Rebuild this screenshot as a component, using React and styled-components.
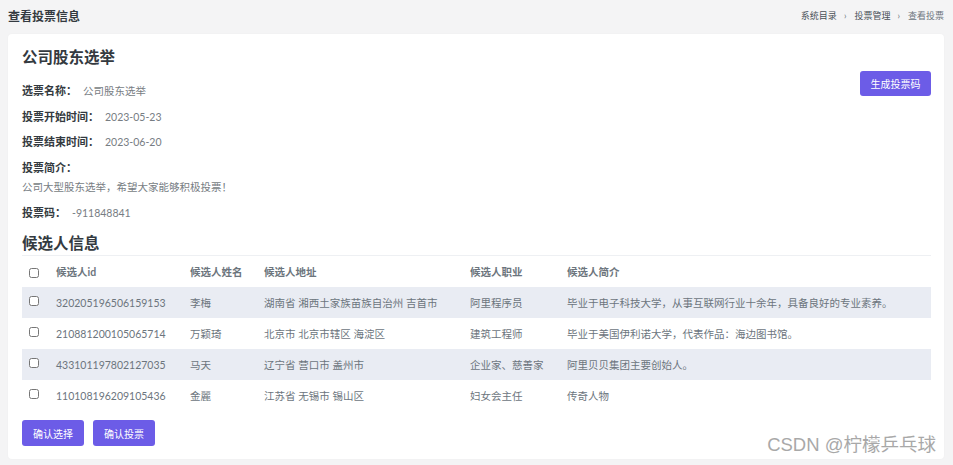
import styled, { createGlobalStyle } from "styled-components";

const GlobalStyle = createGlobalStyle`
  html, body {
    margin: 0;
    padding: 0;
    background: #f4f4f5;
    font-family: Lato, "Noto Sans CJK SC", sans-serif;
  }
`;

const Page = styled.div`
  position: relative;
  width: 953px;
  height: 465px;
  padding: 0 9px 0 8px;
  box-sizing: border-box;
`;

const TopBar = styled.div`
  display: flex;
  align-items: center;
  justify-content: space-between;
  height: 30px;
`;

const PageTitle = styled.h4`
  margin: 0;
  font-size: 12px;
  font-weight: 700;
  color: #343a40;
`;

const Crumbs = styled.ol`
  display: flex;
  align-items: center;
  margin: 0;
  padding: 0;
  list-style: none;
  font-size: 9px;
`;

const Crumb = styled.li`
  color: ${(p) => (p.$active ? "#6c757d" : "#495057")};
  &:not(:first-child)::before {
    content: "›";
    padding: 0 8px 0 7px;
    color: #6c757d;
  }
`;

const Card = styled.div`
  margin-top: 4px;
  background: #fff;
  border-radius: 4px;
  padding: 12px 13px 13px 14px;
  box-shadow: 0 0 2px rgba(0, 0, 0, 0.04);
`;

const CardTitle = styled.h3`
  margin: 0 0 14px;
  font-size: 15.5px;
  font-weight: 700;
  color: #343a40;
  line-height: 22px;
`;

const InfoWrap = styled.div`
  display: flex;
  justify-content: space-between;
  align-items: flex-start;
`;

const Fields = styled.div`
  display: flex;
  flex-direction: column;
`;

const Field = styled.div`
  display: flex;
  align-items: baseline;
  height: 25.5px;
  line-height: 18px;
`;

const Label = styled.span`
  font-size: 11px;
  font-weight: 700;
  color: #343a40;
  margin-right: 6px;
`;

const Value = styled.span`
  font-size: 10.5px;
  color: #777d83;
`;

const Intro = styled.div`
  display: flex;
  flex-direction: column;
  margin-bottom: 9px;
`;

const IntroText = styled.p`
  margin: 4px 0 0;
  font-size: 10.5px;
  color: #777d83;
  line-height: 16px;
`;

const Button = styled.button`
  height: 26px;
  padding: 0 11px;
  border: none;
  border-radius: 3px;
  background: #6c5ce7;
  color: #fff;
  font-family: inherit;
  font-size: 10px;
  white-space: nowrap;
  cursor: pointer;
`;

const CodeButton = styled(Button)`
  margin-top: 25px;
  width: 71px;
  height: 25px;
  padding: 0;
`;

const SectionTitle = styled.h4`
  margin: 4px 0 2px;
  font-size: 15.5px;
  font-weight: 700;
  color: #343a40;
  line-height: 20px;
`;

const Table = styled.table`
  width: 100%;
  border-collapse: collapse;
  border-top: 1px solid #eef0f3;
  font-size: 10.5px;
`;

const Th = styled.th`
  text-align: left;
  font-weight: 700;
  color: #6c757d;
  height: 31px;
  padding: 0;
  width: ${(p) => p.$w || "auto"};
`;

const Tr = styled.tr`
  background: ${(p) => (p.$striped ? "#e9ecf3" : "transparent")};
`;

const Td = styled.td`
  color: #6c757d;
  height: 31px;
  padding: 0;
  vertical-align: middle;
`;

const CheckCell = styled.td`
  height: 22px;
  padding: 9px 0 0 7px;
  vertical-align: top;
  line-height: 10px;
`;

const CheckHead = styled.th`
  padding: 2px 0 0 7px;
  width: 27px;
  text-align: left;
  vertical-align: middle;
  line-height: 10px;
`;

const Box = styled.input.attrs({ type: "checkbox" })`
  width: 10px;
  height: 10px;
  margin: 0;
  vertical-align: top;
`;

const Actions = styled.div`
  display: flex;
  gap: 9px;
  margin-top: 9px;
`;

const Watermark = styled.div`
  position: absolute;
  right: 17px;
  bottom: 9px;
  font-family: "Liberation Sans", "Noto Sans CJK SC", sans-serif;
  font-size: 18.5px;
  color: #9a9a9a;
  opacity: 0.85;
`;

const candidates = [
  {
    id: "320205196506159153",
    name: "李梅",
    addr: "湖南省 湘西土家族苗族自治州 吉首市",
    job: "阿里程序员",
    intro: "毕业于电子科技大学，从事互联网行业十余年，具备良好的专业素养。",
  },
  {
    id: "210881200105065714",
    name: "万颖琦",
    addr: "北京市 北京市辖区 海淀区",
    job: "建筑工程师",
    intro: "毕业于美国伊利诺大学，代表作品：海边图书馆。",
  },
  {
    id: "433101197802127035",
    name: "马天",
    addr: "辽宁省 营口市 盖州市",
    job: "企业家、慈善家",
    intro: "阿里贝贝集团主要创始人。",
  },
  {
    id: "110108196209105436",
    name: "金麗",
    addr: "江苏省 无锡市 锡山区",
    job: "妇女会主任",
    intro: "传奇人物",
  },
];

const App = () => {
  return (
    <>
      <GlobalStyle />
      <Page>
        <TopBar>
          <PageTitle>查看投票信息</PageTitle>
          <Crumbs>
            <Crumb>系统目录</Crumb>
            <Crumb>投票管理</Crumb>
            <Crumb $active>查看投票</Crumb>
          </Crumbs>
        </TopBar>
        <Card>
          <InfoWrap>
            <Fields>
              <CardTitle>公司股东选举</CardTitle>
              <Field>
                <Label>选票名称：</Label>
                <Value>公司股东选举</Value>
              </Field>
              <Field>
                <Label>投票开始时间：</Label>
                <Value>2023-05-23</Value>
              </Field>
              <Field>
                <Label>投票结束时间：</Label>
                <Value>2023-06-20</Value>
              </Field>
              <Intro>
                <Label>投票简介：</Label>
                <IntroText>公司大型股东选举，希望大家能够积极投票！</IntroText>
              </Intro>
              <Field>
                <Label>投票码：</Label>
                <Value>-911848841</Value>
              </Field>
            </Fields>
            <CodeButton>生成投票码</CodeButton>
          </InfoWrap>
          <SectionTitle>候选人信息</SectionTitle>
          <Table>
            <thead>
              <tr>
                <CheckHead>
                  <Box />
                </CheckHead>
                <Th $w="134px">候选人id</Th>
                <Th $w="74px">候选人姓名</Th>
                <Th $w="206px">候选人地址</Th>
                <Th $w="97px">候选人职业</Th>
                <Th>候选人简介</Th>
              </tr>
            </thead>
            <tbody>
              {candidates.map((c, i) => (
                <Tr key={c.id} $striped={i % 2 === 0}>
                  <CheckCell>
                    <Box />
                  </CheckCell>
                  <Td>{c.id}</Td>
                  <Td>{c.name}</Td>
                  <Td>{c.addr}</Td>
                  <Td>{c.job}</Td>
                  <Td>{c.intro}</Td>
                </Tr>
              ))}
            </tbody>
          </Table>
          <Actions>
            <Button>确认选择</Button>
            <Button>确认投票</Button>
          </Actions>
        </Card>
        <Watermark>CSDN @柠檬乒乓球</Watermark>
      </Page>
    </>
  );
};

export default App;
